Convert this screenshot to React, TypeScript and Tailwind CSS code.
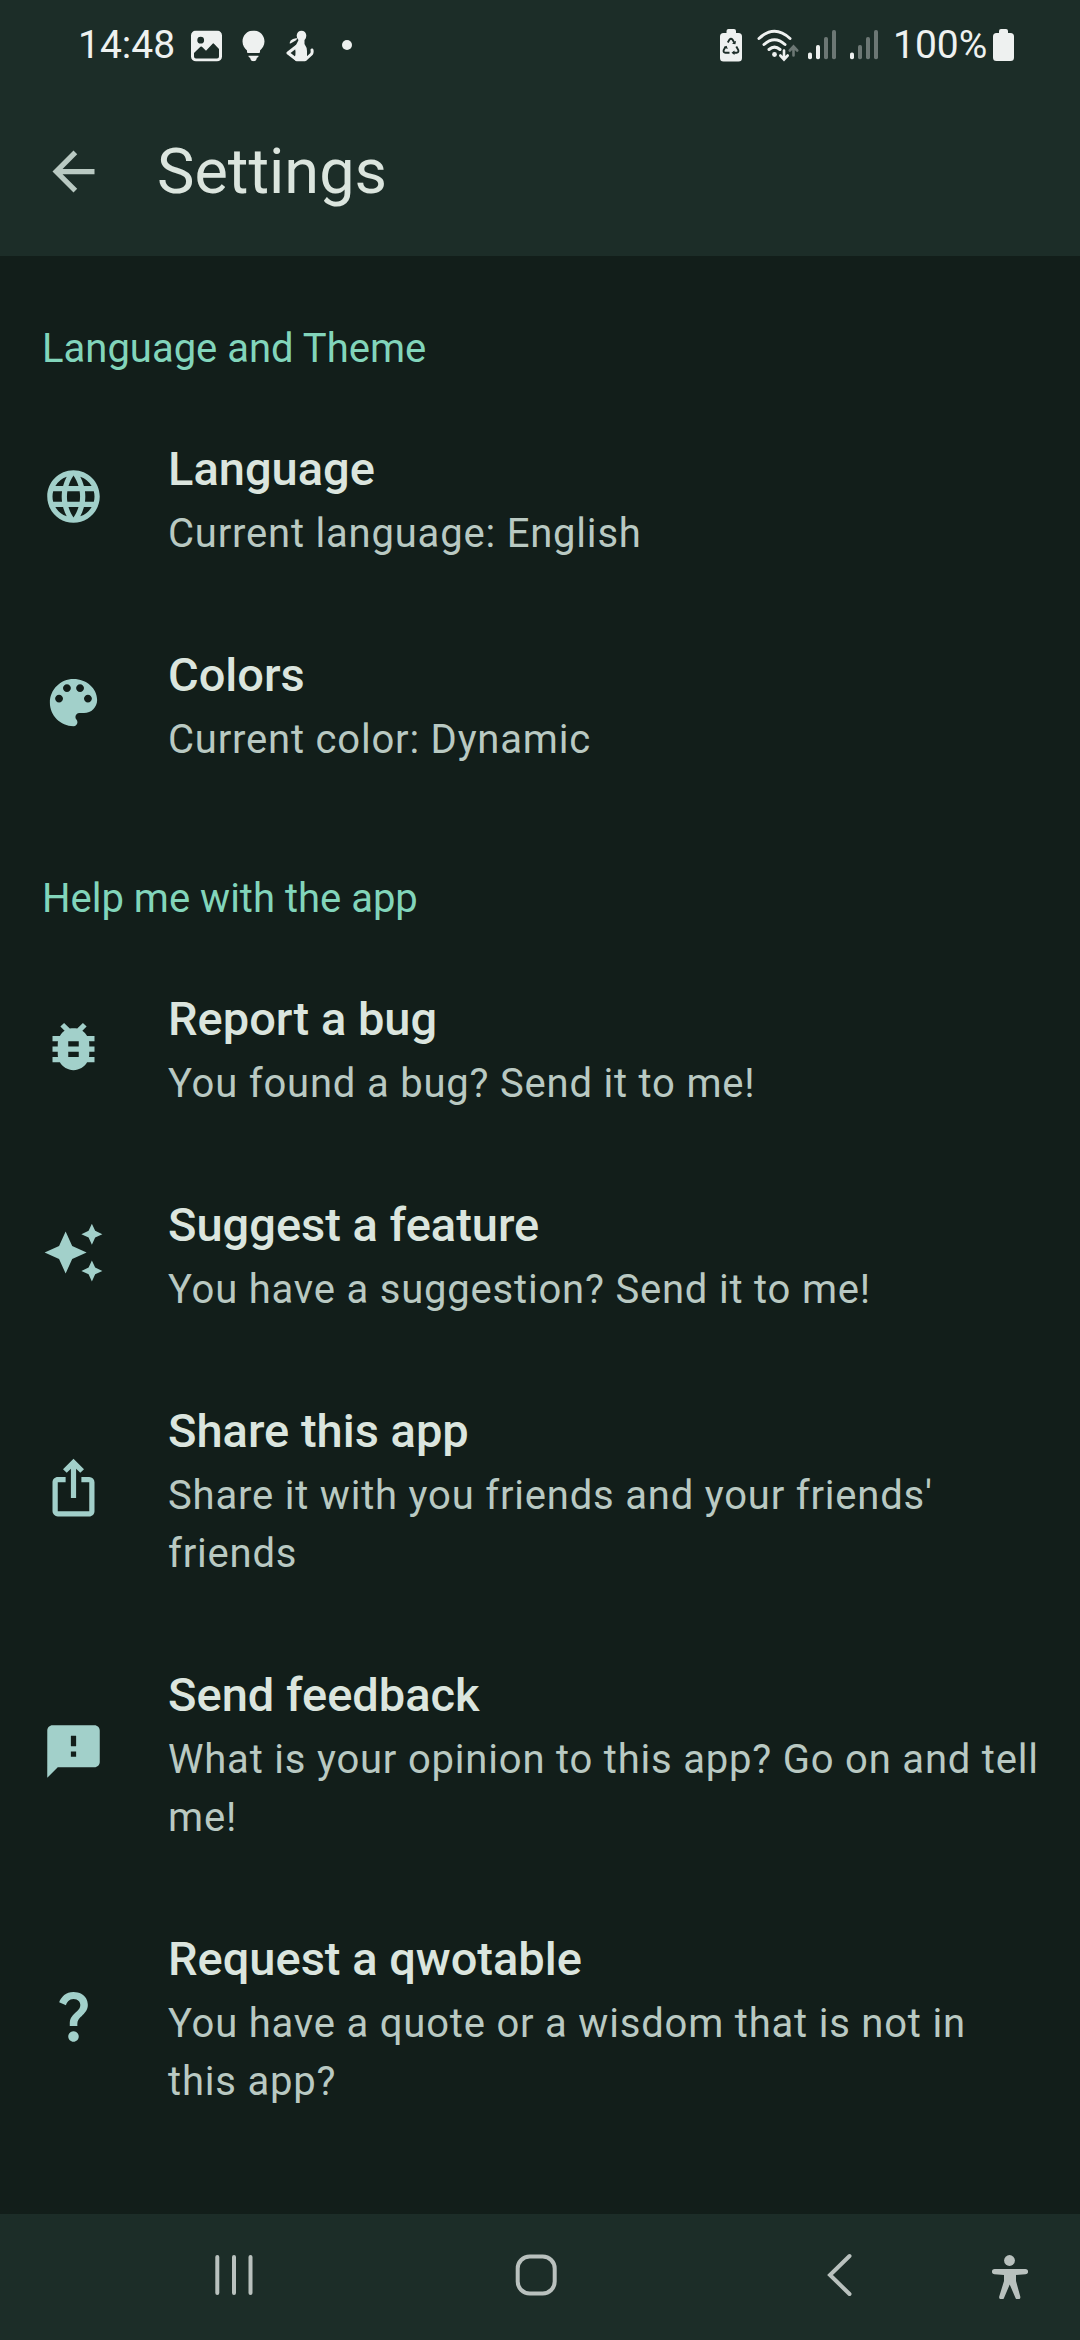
import type { ReactNode } from 'react';
import { MdArrowBack, MdBugReport, MdFeedback, MdIosShare, MdLanguage, MdQuestionMark } from 'react-icons/md';

function PaletteIcon() {
  return (
    <svg viewBox="0 0 24 24" className="size-[63px]" fill="currentColor">
      <path d="M12 3c-4.97 0-9 4.03-9 9s4.03 9 9 9c.83 0 1.5-.67 1.5-1.5 0-.39-.15-.74-.39-1.01-.23-.26-.38-.61-.38-.99 0-.83.67-1.5 1.5-1.5H16c2.76 0 5-2.24 5-5 0-4.42-4.03-8-9-8zm-5.5 9c-.83 0-1.5-.67-1.5-1.5S5.67 9 6.5 9 8 9.67 8 10.5 7.33 12 6.5 12zm3-4C8.67 8 8 7.33 8 6.5S8.67 5 9.5 5s1.5.67 1.5 1.5S10.33 8 9.5 8zm5 0c-.83 0-1.5-.67-1.5-1.5S13.67 5 14.5 5s1.5.67 1.5 1.5S15.33 8 14.5 8zm3 4c-.83 0-1.5-.67-1.5-1.5S16.67 9 17.5 9s1.5.67 1.5 1.5-.67 1.5-1.5 1.5z" />
    </svg>
  );
}

function SparkleIcon() {
  return (
    <svg viewBox="0 0 24 24" className="size-[63px]" fill="currentColor">
      <path d="M19 9l1.25-2.75L23 5l-2.75-1.25L19 1l-1.25 2.75L15 5l2.75 1.25zM19 15l-1.25 2.75L15 19l2.75 1.25L19 23l1.25-2.75L23 19l-2.75-1.25zM11.5 9.5L9 4 6.5 9.5 1 12l5.5 2.5L9 20l2.5-5.500L17 12z" />
    </svg>
  );
}

function Signal({ level }: { level: number }) {
  const bars = [
    { x: 2, top: 24.5 },
    { x: 10, top: 17 },
    { x: 18, top: 9 },
    { x: 26, top: 2 },
  ];
  return (
    <svg viewBox="0 0 28 31" className="h-[31px] w-[28px] shrink-0">
      {bars.map((b, i) => (
        <rect key={b.x} x={b.x - 2} y={b.top - 2} width="4" height={31.3 - b.top} rx="1.8" fill={i < level ? '#eef1f0' : '#6c7774'} />
      ))}
    </svg>
  );
}

function StatusBar() {
  return (
    <div className="flex h-[90px] items-center pr-[66px] pl-[78px] text-[#eef1f0]">
      <span className="w-[113px] text-[39px] leading-none">14:48</span>
      <svg viewBox="0 0 31 31" className="size-[31px] translate-y-[0.5px]" fill="currentColor">
        <path fillRule="evenodd" d="M5 0h21a5 5 0 0 1 5 5v21a5 5 0 0 1-5 5H5a5 5 0 0 1-5-5V5a5 5 0 0 1 5-5zM9.700 6.300a3.400 3.400 0 1 0 0 6.800 3.400 3.400 0 0 0 0-6.800zM3 22.500V26a2 2 0 0 0 2 2h21a2 2 0 0 0 2-2v-7.500l-5-5.300q-.7-.7-1.400 0L15 20.200l-4-3.900q-.8-.7-1.600 0z" />
      </svg>
      <svg viewBox="0 0 23 31" className="ml-[20px] h-[31px] w-[23px] translate-y-[0.5px]" fill="currentColor">
        <path d="M11.500 0C17.700 0 22.500 4.900 22.500 11c0 4-2.200 7-4.500 9v1.500q0 1-1 1H6q-1 0-1-1V20C2.700 18 .5 15 .5 11 .5 4.900 5.300 0 11.500 0zM6.500 25.200h10v.5c0 .9-.8 1.300-1.600 1.500-.4 2.300-1.500 3.600-3.400 3.600s-3-1.300-3.400-3.600c-.8-.2-1.600-.6-1.600-1.500z" />
      </svg>
      <svg viewBox="0 0 28 31" className="ml-[21px] h-[31px] w-[28px] translate-y-[0.5px]" fill="currentColor">
        <ellipse cx="15.500" cy="5.300" rx="4.800" ry="5.300" />
        <path d="M3.500 12.800Q4 9.500 7 8.500L11 7.500l-.5 2L4.500 13z" />
        <path d="M12.500 9.500h6v4Q21 17 21 20.500V29l-2 2h-8.500L8 28.500Q10 25 9.500 21L8.800 17z" />
        <path d="M11 15.500L2 22.500l8.500 6.500h9l6-5.500q1-1.500.5-4" fill="none" stroke="currentColor" strokeWidth="3" strokeLinejoin="round" strokeLinecap="round" />
      </svg>
      <span className="ml-[28px] size-[10px] rounded-full bg-current" />

      <svg viewBox="0 0 22 33" className="ml-auto h-[33px] w-[22px]" fill="currentColor">
        <path d="M6.500 2q0-2 2-2h5.500q2 0 2 2v2h2.500q3.500 0 3.500 3.500v21.500q0 3.500-3.500 3.500h-15Q0 32.500 0 29V7.500Q0 4 3.500 4h3z" />
        <path d="M7.800 13.500l1.700-2.900q1.500-1.800 3 0l1.700 2.900M16.300 17.500l2 3.600q.6 2.400-1.800 2.700h-3.500M9.500 23.800H5.500q-2.500-.3-1.800-2.700l2-3.600" fill="none" stroke="#1c2d28" strokeWidth="1.9" />
        <path d="M12 14.800l3.400.4.700-3.400zM14.500 21.500v4.500l-3-2.200zM3.800 18.500l2.800-1.700 1.200 3.300z" fill="#1c2d28" />
      </svg>
      <svg viewBox="0 0 42 33" className="ml-[15px] h-[33px] w-[42px]" fill="none" strokeLinecap="round">
        <g stroke="#eef1f0" strokeWidth="3">
          <path d="M2 9.500Q17.500-5 33 9.500M7 15.500q10.500-9.500 21 0M12 20.500q5.500-4.700 11 0" />
          <path d="M27 21.500v8M23.300 26.500l3.700 4 3.700-4" strokeWidth="2.6" />
        </g>
        <circle cx="17.500" cy="25.500" r="2.4" fill="#eef1f0" />
        <path d="M36.500 26.500v-8M32.800 21.500l3.700-4 3.700 4" stroke="#6c7774" strokeWidth="2.6" />
      </svg>
      <span className="ml-[9px] flex gap-[14px]">
        <Signal level={2} />
        <Signal level={1} />
      </span>
      <span className="ml-[15px] w-[100px] text-[39px] leading-none">100%</span>
      <svg viewBox="0 0 21 32" className="h-[32px] w-[21px]" fill="currentColor">
        <path d="M6 2q0-2 2-2h5q2 0 2 2v2h2.500Q21 4 21 7.500v21q0 3.500-3.500 3.500h-14Q0 32 0 28.500v-21Q0 4 3.500 4H6z" />
      </svg>
    </div>
  );
}

function SectionLabel({ children }: { children: ReactNode }) {
  return <h2 className="h-[138px] pt-[64px] pl-[42px] text-[40px] leading-[58px] text-[#82d5bb]">{children}</h2>;
}

function Item({ icon, title, text }: { icon: ReactNode; title: string; text: string }) {
  return (
    <div className="flex items-center pl-[42px]">
      <span className="shrink-0 pb-[2px] text-[#a2d0ca]">{icon}</span>
      <div className="ml-[63px] flex-1 pt-[45px] pr-[38px] pb-[37px]">
        <h3 className="text-[47px] leading-[60px] font-medium text-[#dbe5de]">{title}</h3>
        <p className="mt-[6px] text-[40px] leading-[58px] tracking-[0.8px] text-[#b9c9c2]">{text}</p>
      </div>
    </div>
  );
}

function NavBar() {
  return (
    <nav className="flex h-[126px] items-start bg-[#1c2d28] pt-[39px] pl-[213px] text-[#b9c1be]">
      <svg viewBox="0 0 42 44" className="h-[44px] w-[42px]" stroke="currentColor" strokeWidth="4" strokeLinecap="round">
        <path d="M4.300 4v36M21 4v36M37.500 4v36" />
      </svg>
      <svg viewBox="0 0 44 44" className="ml-[259px] size-[44px]" fill="none" stroke="currentColor" strokeWidth="4">
        <rect x="3.700" y="3.500" width="37" height="37" rx="12" />
      </svg>
      <svg viewBox="0 0 28 44" className="ml-[267px] h-[44px] w-[28px]" fill="none" stroke="currentColor" strokeWidth="4" strokeLinecap="round">
        <path d="M24.500 3L5 22l19.500 19" />
      </svg>
      <svg viewBox="0 0 36 46" className="ml-[139px] h-[46px] w-[36px]" fill="currentColor">
        <circle cx="17.500" cy="7.500" r="5.4" />
        <path d="M2.500 16h31a2.600 2.600 0 0 1 0 5.200L24 22v6l4.200 15.300a2.500 2.500 0 0 1-4.700 1.700L17.700 31.500 12 45a2.500 2.500 0 0 1-4.700-1.700L12 28v-6l-9.500-.8a2.600 2.600 0 0 1 0-5.200z" />
      </svg>
    </nav>
  );
}

export default function App() {
  return (
    <div className="flex h-[2340px] w-[1080px] flex-col overflow-hidden bg-[#121e1a] font-[Roboto,sans-serif]">
      <header className="h-[256px] bg-[#1c2d28]">
        <StatusBar />
        <div className="flex h-[163px] items-center pl-[42px]">
          <MdArrowBack className="size-[63px] text-[#b9c9c2]" />
          <h1 className="ml-[52px] text-[63px] leading-none text-[#dbe5de]">Settings</h1>
        </div>
      </header>
      <main className="flex-1">
        <SectionLabel>Language and Theme</SectionLabel>
        <Item icon={<MdLanguage className="size-[63px]" />} title="Language" text="Current language: English" />
        <Item icon={<PaletteIcon />} title="Colors" text="Current color: Dynamic" />
        <SectionLabel>Help me with the app</SectionLabel>
        <Item icon={<MdBugReport className="size-[63px]" />} title="Report a bug" text="You found a bug? Send it to me!" />
        <Item icon={<SparkleIcon />} title="Suggest a feature" text="You have a suggestion? Send it to me!" />
        <Item icon={<MdIosShare className="size-[63px]" />} title="Share this app" text="Share it with you friends and your friends' friends" />
        <Item icon={<MdFeedback className="size-[63px]" />} title="Send feedback" text="What is your opinion to this app? Go on and tell me!" />
        <Item icon={<MdQuestionMark className="size-[63px]" />} title="Request a qwotable" text="You have a quote or a wisdom that is not in this app?" />
      </main>
      <NavBar />
    </div>
  );
}
